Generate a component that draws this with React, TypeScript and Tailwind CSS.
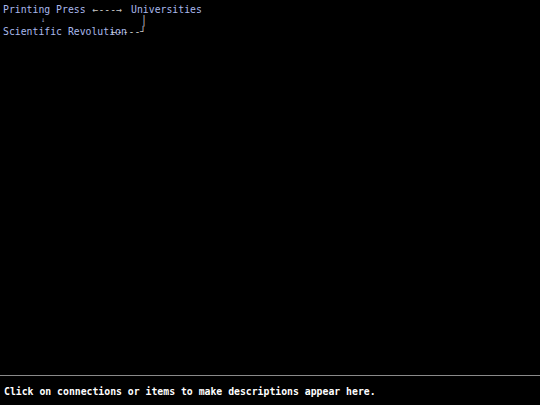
import React from "react";

const mono = { fontFamily: '"DejaVu Sans Mono", "Liberation Mono", monospace' };

export default function App() {
  return (
    <div
      className="w-[540px] h-[405px] bg-black flex flex-col text-[9.8px] leading-[11px] whitespace-pre"
      style={mono}
    >
      {/* diagram canvas: one text row per grid line */}
      <div className="flex-1 flex flex-col pt-[4px] pl-[3px]">
        <div className="flex h-[11px]">
          <span className="text-[#a9b9ec] cursor-pointer">Printing Press</span>
          <span className="ml-[7px] text-[#c8c8c8] cursor-pointer">←---→</span>
          <span className="ml-[9px] text-[#a9b9ec] cursor-pointer">Universities</span>
        </div>
        <div className="flex h-[11px] items-start">
          <span className="ml-[38px] mt-[1px] text-[7px] leading-[9px] text-[#9aa4c8]">↓</span>
          <span className="ml-[96px] text-[#c8c8c8]">│</span>
        </div>
        <div className="flex h-[11px]">
          <span className="text-[#a9b9ec] cursor-pointer">Scientific Revolution</span>
          <span className="ml-[-16px] text-[#c8c8c8] cursor-pointer">←----┘</span>
        </div>
      </div>

      {/* description bar */}
      <div className="h-[30px] border-t border-[#8a8a8a] px-[4px] pt-[10px]">
        <p className="text-white font-bold">
          Click on connections or items to make descriptions appear here.
        </p>
      </div>
    </div>
  );
}
